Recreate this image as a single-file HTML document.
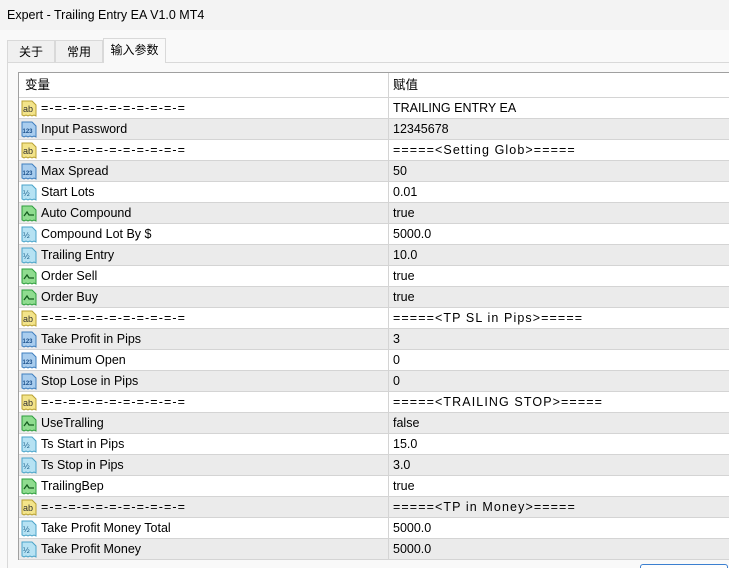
<!DOCTYPE html><html><head><meta charset="utf-8"><style>
html,body{margin:0;width:729px;height:568px;overflow:hidden}
body{background:#f9f9f9;font-family:"Liberation Sans","Noto Sans CJK SC",sans-serif;font-size:12.5px;color:#000;position:relative}
.title{position:absolute;left:0;top:0;width:729px;height:30px;background:#f3f3f3;font-size:12.5px;line-height:30px;padding-left:7px;box-sizing:border-box}
.tab{position:absolute;top:40px;height:22px;line-height:22px;background:#f0f0f0;border:1px solid #d9d9d9;border-bottom:none;box-sizing:border-box;text-align:center;font-size:12px}
.panel{position:absolute;left:7px;top:62px;width:722px;height:506px;background:#f9f9f9;border-top:1px solid #d9d9d9;border-left:1px solid #d9d9d9}
.tbl{position:absolute;left:18px;top:72px;width:720px;height:488px;border:1px solid #a0a0a0;background:#fff;box-sizing:border-box}
.row{position:absolute;left:0;width:720px;height:21px;border-bottom:1px solid #d4d4d4;box-sizing:border-box;line-height:20px}
.g{background:#ebebeb}
.n{position:absolute;left:22px}
.v{position:absolute;left:369px;border-left:1px solid #d4d4d4;padding-left:4px;height:20px}
.s{letter-spacing:1.1px}
.ic{position:absolute;left:2px;top:2px}
</style></head><body>
<div class="title">Expert - Trailing Entry EA V1.0 MT4</div>
<div class="panel"></div>
<div class="tab" style="left:7px;width:48px">关于</div>
<div class="tab" style="left:55px;width:48px">常用</div>
<div class="tab" style="left:103px;top:38px;height:25px;width:63px;background:#f9f9f9">输入参数</div>
<div class="tbl" id="t">
<div class="row" style="top:0;height:25px;line-height:25px;border-bottom:1px solid #d4d4d4"><span class="n" style="left:6px">变量</span><span class="v" style="height:24px;padding-left:4px">赋值</span></div>
</div>
<div style="position:absolute;left:640px;top:564px;width:86px;height:10px;border:1px solid #3b7fd0;border-radius:3px;background:#fdfdfd"></div>
<script>
var ab='<svg class="ic" width="16" height="17"><path d="M1 1h10l4 4v11l-2-1-2 1-2-1-2 1-2-1-2 1-2-1z" fill="#f3e48a" stroke="#b8a032"/><text x="2" y="12" font-size="9" font-family="Liberation Sans" fill="#333">ab</text></svg>';
var n123='<svg class="ic" width="16" height="17"><path d="M1 1h10l4 4v11l-2-1-2 1-2-1-2 1-2-1-2 1-2-1z" fill="#a9cdee" stroke="#3f7fbf"/><text x="1.5" y="12" font-size="6" font-family="Liberation Sans" fill="#1b4f8a" font-weight="bold">123</text></svg>';
var half='<svg class="ic" width="16" height="17"><path d="M1 1h10l4 4v11l-2-1-2 1-2-1-2 1-2-1-2 1-2-1z" fill="#b6e2f3" stroke="#4aa3c8"/><text x="2" y="12" font-size="8" font-family="Liberation Sans" fill="#1b5f8a">½</text></svg>';
var bl='<svg class="ic" width="16" height="17"><path d="M1 1h10l4 4v11l-2-1-2 1-2-1-2 1-2-1-2 1-2-1z" fill="#8fdc8f" stroke="#2e9e3e"/><path d="M3 11l3-4 2 3h5" stroke="#145c1e" stroke-width="1.3" fill="none"/></svg>';
var S='<span class="s">=-=-=-=-=-=-=-=-=-=-=</span>';
var rows=[[ab,S,'TRAILING ENTRY EA'],[n123,'Input Password','12345678'],[ab,S,'<span class="s">=====&lt;Setting Glob&gt;=====</span>'],[n123,'Max Spread','50'],[half,'Start Lots','0.01'],[bl,'Auto Compound','true'],[half,'Compound Lot By $','5000.0'],[half,'Trailing Entry','10.0'],[bl,'Order Sell','true'],[bl,'Order Buy','true'],[ab,S,'<span class="s">=====&lt;TP SL in Pips&gt;=====</span>'],[n123,'Take Profit in Pips','3'],[n123,'Minimum Open','0'],[n123,'Stop Lose in Pips','0'],[ab,S,'<span class="s">=====&lt;TRAILING STOP&gt;=====</span>'],[bl,'UseTralling','false'],[half,'Ts Start in Pips','15.0'],[half,'Ts Stop in Pips','3.0'],[bl,'TrailingBep','true'],[ab,S,'<span class="s">=====&lt;TP in Money&gt;=====</span>'],[half,'Take Profit Money Total','5000.0'],[half,'Take Profit Money','5000.0']];
var h='';rows.forEach(function(r,i){h+='<div class="row'+(i%2?' g':'')+'" style="top:'+(25+i*21)+'px">'+r[0]+'<span class="n">'+r[1]+'</span><span class="v">'+r[2]+'</span></div>';});
document.getElementById('t').insertAdjacentHTML('beforeend',h);
</script>
</body></html>
